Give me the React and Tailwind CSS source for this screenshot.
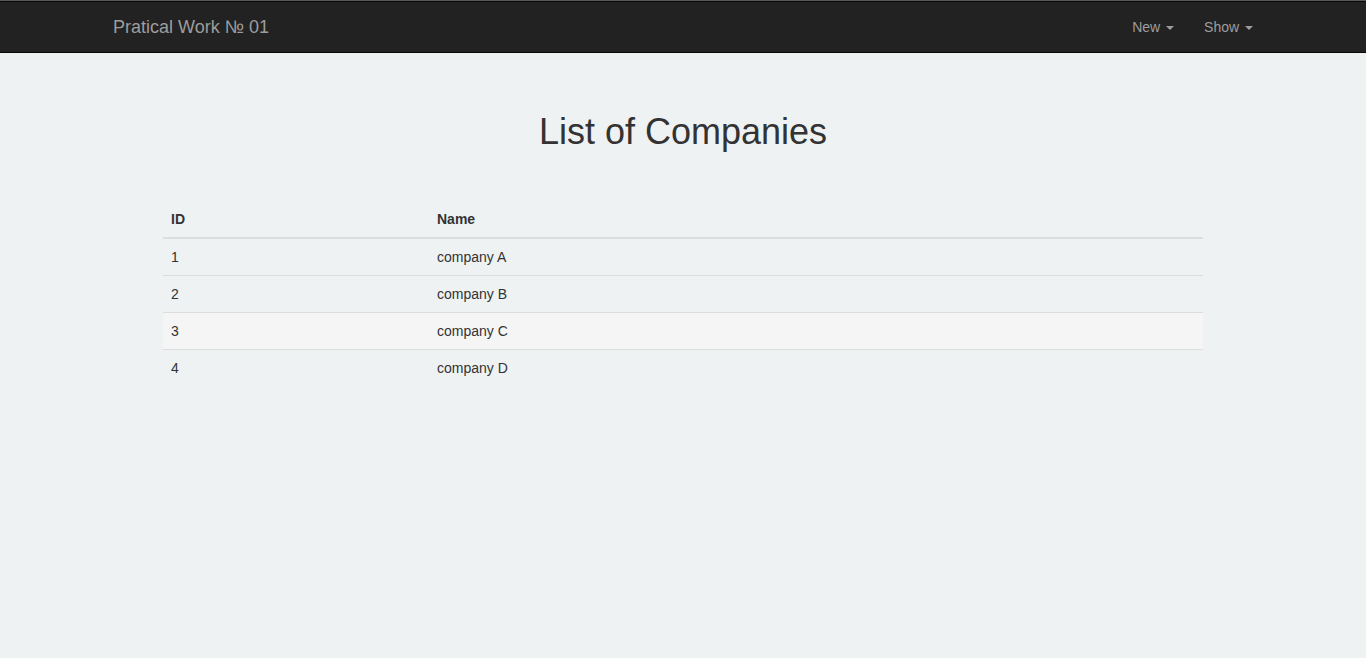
import React from 'react';

const companies = [
    { id: 1, name: 'company A' },
    { id: 2, name: 'company B' },
    { id: 3, name: 'company C' },
    { id: 4, name: 'company D' },
];

function Caret() {
    return (
        <span className="ml-[2px] inline-block h-0 w-0 border-x-[4px] border-t-[4px] border-x-transparent border-t-[#9d9d9d] align-middle"></span>
    );
}

export default function App() {
    return (
        <div className="min-h-[658px] bg-[#eef2f3] font-['Liberation_Sans',Arial,sans-serif] text-[14px] leading-[20px] text-[#333]">
            {/* Navbar */}
            <div className="h-px bg-[#5a5a5a]"></div>
            <nav className="border-y border-[#080808] bg-[#222]">
                <div className="mx-auto flex h-[50px] w-[1170px] items-center justify-between pl-[15px]">
                    <a className="text-[18px] leading-[20px] text-[#9d9d9d]">Pratical Work № 01</a>
                    <ul className="flex">
                        <li className="px-[15px] py-[15px] text-[#9d9d9d]">
                            New <Caret />
                        </li>
                        <li className="px-[15px] py-[15px] text-[#9d9d9d]">
                            Show <Caret />
                        </li>
                    </ul>
                </div>
            </nav>

            {/* Content */}
            <div className="mx-auto w-[1040px]">
                <h1 className="mt-[59px] text-center text-[36px] leading-[40px] font-normal text-[#333]">List of Companies</h1>
                <table className="mt-[49px] w-full">
                    <thead>
                        <tr className="border-b-2 border-[#ddd]">
                            <th className="w-[266px] p-[8px] text-left font-bold">ID</th>
                            <th className="p-[8px] text-left font-bold">Name</th>
                        </tr>
                    </thead>
                    <tbody>
                        {companies.map((c, i) => (
                            <tr key={c.id} className={`${i > 0 ? 'border-t border-[#ddd]' : ''} ${c.id === 3 ? 'bg-[#f5f5f5]' : ''}`}>
                                <td className="p-[8px]">{c.id}</td>
                                <td className="p-[8px]">{c.name}</td>
                            </tr>
                        ))}
                    </tbody>
                </table>
            </div>
        </div>
    );
}
